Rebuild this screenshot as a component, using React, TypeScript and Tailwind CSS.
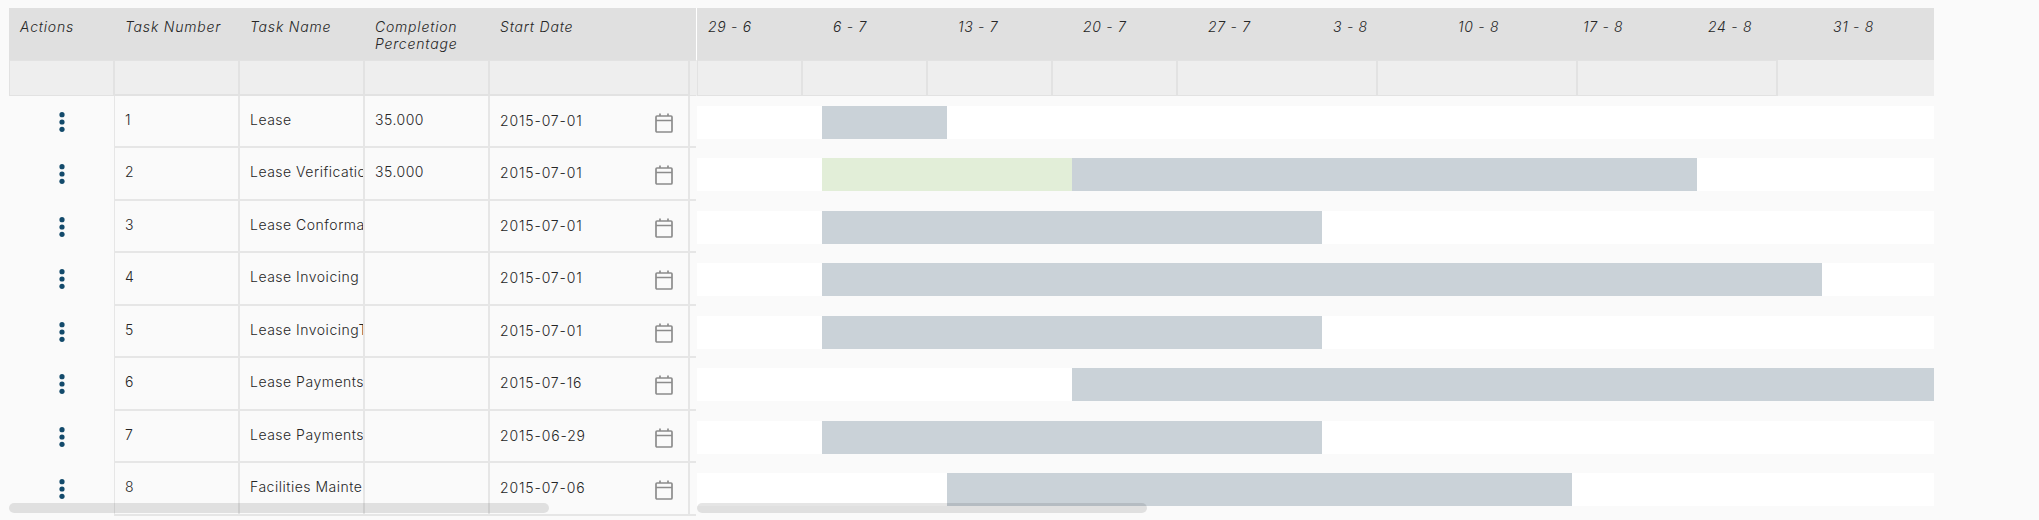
import React from 'react';

const weeks = ['29 - 6', '6 - 7', '13 - 7', '20 - 7', '27 - 7', '3 - 8', '10 - 8', '17 - 8', '24 - 8', '31 - 8'];
const filterCells = ['w-[105px]', 'w-[125px]', 'w-[125px]', 'w-[125px]', 'w-[200px]', 'w-[200px]', 'w-[200px]'];

const tasks = [
  { no: '1', name: 'Lease', pct: '35.000', date: '2015-07-01', pad: 'w-[125px]', done: '', todo: 'w-[125px]' },
  { no: '2', name: 'Lease Verification', pct: '35.000', date: '2015-07-01', pad: 'w-[125px]', done: 'w-[250px]', todo: 'w-[625px]' },
  { no: '3', name: 'Lease Conformance', pct: '', date: '2015-07-01', pad: 'w-[125px]', done: '', todo: 'w-[500px]' },
  { no: '4', name: 'Lease Invoicing', pct: '', date: '2015-07-01', pad: 'w-[125px]', done: '', todo: 'w-[1000px]' },
  { no: '5', name: 'Lease InvoicingTax', pct: '', date: '2015-07-01', pad: 'w-[125px]', done: '', todo: 'w-[500px]' },
  { no: '6', name: 'Lease Payments', pct: '', date: '2015-07-16', pad: 'w-[375px]', done: '', todo: 'flex-1' },
  { no: '7', name: 'Lease Payments', pct: '', date: '2015-06-29', pad: 'w-[125px]', done: '', todo: 'w-[500px]' },
  { no: '8', name: 'Facilities Maintenance', pct: '', date: '2015-07-06', pad: 'w-[250px]', done: '', todo: 'w-[625px]' },
];

function Dots() {
  return (
    <svg width="6" height="20" viewBox="0 0 6 20" fill="#134a6b">
      <circle cx="3" cy="2.700" r="2.600" />
      <circle cx="3" cy="10" r="2.600" />
      <circle cx="3" cy="17.300" r="2.600" />
    </svg>
  );
}

function CalendarIcon() {
  return (
    <svg width="18" height="20" viewBox="0 0 18 20" fill="none" stroke="#8c8c8c" strokeWidth="1.700">
      <rect x="1" y="3" width="16" height="16" rx="1" />
      <path d="M1 7.500h16M5 0.500v2.500M13 0.500v2.500" />
    </svg>
  );
}

const cell = 'shrink-0 overflow-hidden whitespace-nowrap border-r-2 border-b-2 border-[#e6e6e6] pl-[10px] pt-[15px] text-[14px] leading-[18px]';

export default function App() {
  return (
    <div className="relative h-[520px] w-[2039px] overflow-hidden bg-[#fafafa] pt-2 font-['Inter','Liberation_Sans',sans-serif] font-[350] tracking-[0.5px] text-[#262626]">
      <div className="flex">
        <div className="ml-[9px] w-[687px] shrink-0">
          <div className="flex h-[52px] bg-[#e0e0e0] pt-[10px] text-[14px] italic leading-[17px] tracking-[0.8px]">
            <div className="w-[106px] shrink-0 pl-[11px]">Actions</div>
            <div className="w-[125px] shrink-0 pl-[10px]">Task Number</div>
            <div className="w-[125px] shrink-0 pl-[10px]">Task Name</div>
            <div className="w-[125px] shrink-0 pl-[10px]">Completion<br />Percentage</div>
            <div className="pl-[10px]">Start Date</div>
          </div>
          <div className="flex h-[35.750px] bg-[#eeeeee]">
            <div className="w-[106px] shrink-0 border-y border-l border-r-2 border-[#e2e2e2]" />
            <div className="w-[125px] shrink-0 border-r-2 border-t border-b-2 border-[#e2e2e2]" />
            <div className="w-[125px] shrink-0 border-r-2 border-t border-b-2 border-[#e2e2e2]" />
            <div className="w-[125px] shrink-0 border-r-2 border-t border-b-2 border-[#e2e2e2]" />
            <div className="w-[200px] shrink-0 border-r-2 border-t border-b-2 border-[#e2e2e2]" />
            <div className="flex-1 border-y border-[#e2e2e2]" />
          </div>
          {tasks.map((t) => (
            <div key={t.no} className="flex h-[52.5px]">
              <div className="flex w-[106px] shrink-0 justify-center border-r border-[#e6e6e6] pt-[16px]">
                <Dots />
              </div>
              <div className={`w-[125px] ${cell}`}>{t.no}</div>
              <div className={`w-[125px] ${cell}`}>{t.name}</div>
              <div className={`w-[125px] ${cell}`}>{t.pct}</div>
              <div className={`flex w-[200px] justify-between pr-[15px] ${cell}`}>
                <span className="pt-[1px] tracking-[0.85px]">{t.date}</span>
                <span className="pt-[2px]"><CalendarIcon /></span>
              </div>
              <div className="flex-1 border-b-2 border-[#e6e6e6]" />
            </div>
          ))}
        </div>
        <div className="w-[1238px] shrink-0">
          <div className="flex h-[52px] border-l border-white bg-[#e0e0e0] pt-[10px] text-[14px] italic leading-[17px] tracking-[0.7px]">
            {weeks.map((w) => (
              <div key={w} className="w-[125px] shrink-0 pl-[11px]">{w}</div>
            ))}
          </div>
          <div className="flex h-[35.750px] bg-[#eeeeee] pl-px">
            {filterCells.map((w, i) => (
              <div key={i} className={`${w} shrink-0 border-b border-r-2 border-t border-[#e2e2e2] first:w-[106px] first:border-l`} />
            ))}
          </div>
          {tasks.map((t) => (
            <div key={t.no} className="h-[52.5px] pl-px pt-[10px]">
              <div className="flex h-[33px] bg-white">
                <div className={`${t.pad} shrink-0`} />
                {t.done && <div className={`${t.done} shrink-0 bg-[#e2eed8]`} />}
                <div className={`${t.todo} bg-[#cad2d8]`} />
              </div>
            </div>
          ))}
        </div>
      </div>
      <div className="absolute left-[9px] top-[503px] h-[10px] w-[540px] rounded-[5px] bg-black/10" />
      <div className="absolute left-[697px] top-[503px] h-[10px] w-[450px] rounded-[5px] bg-black/10" />
    </div>
  );
}
